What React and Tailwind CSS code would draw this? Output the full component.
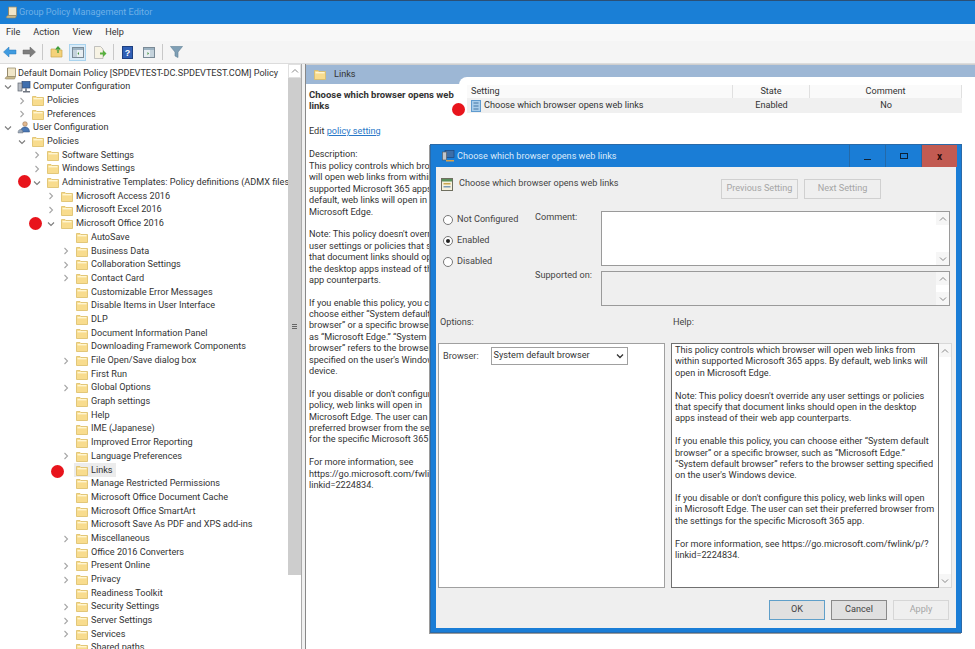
import React from "react";

const font = "font-['Roboto','Noto_Sans',sans-serif]";

function Folder({ className = "" }) {
  return (
    <svg width="12" height="11" viewBox="0 0 12 11" className={`shrink-0 ${className}`}>
      <path d="M0.5 1.5h3.5l1 1h6.5v8h-11z" fill="#f8dc8e" stroke="#dcbc66" strokeWidth="0.8" />
      <rect x="1.5" y="3" width="9" height="1.4" fill="#fff6d2" />
    </svg>
  );
}

function Chevron({ open }) {
  return (
    <svg width="8" height="8" viewBox="0 0 8 8" className="shrink-0">
      {open ? (
        <path d="M1 2.5l3 3 3-3" fill="none" stroke="#7c7c7c" strokeWidth="1.1" />
      ) : (
        <path d="M2.5 1l3 3-3 3" fill="none" stroke="#a6a6a6" strokeWidth="1.1" />
      )}
    </svg>
  );
}

function BookIcon() {
  return (
    <svg width="13" height="13" viewBox="0 0 13 13" className="shrink-0">
      <path d="M3.5 1h8v8.5h-8z" fill="#f0e6c8" stroke="#9a8f70" strokeWidth="0.8" />
      <path d="M1 11.5c1-2 2-2 2.5-2h8l-1 2.5h-8z" fill="#c9b98c" stroke="#8f8465" strokeWidth="0.6" />
      <path d="M3.5 1v8.5" stroke="#8f8465" strokeWidth="0.8" />
    </svg>
  );
}

function ComputerIcon() {
  return (
    <svg width="14" height="12" viewBox="0 0 14 12" className="shrink-0">
      <rect x="5" y="0.5" width="8" height="6.5" fill="#3f6fae" stroke="#2c4a78" strokeWidth="0.7" />
      <rect x="1" y="2" width="4" height="8" fill="#b7bcc4" stroke="#5f6670" strokeWidth="0.7" />
      <path d="M6 10h7v1.5H6z" fill="#6f7580" />
      <rect x="8" y="7" width="2" height="3" fill="#8a909a" />
    </svg>
  );
}

function UserIcon() {
  return (
    <svg width="14" height="13" viewBox="0 0 14 13" className="shrink-0">
      <circle cx="8" cy="3" r="2.3" fill="#e3b98f" stroke="#8a6a4a" strokeWidth="0.5" />
      <path d="M3.5 11c0-3.5 2-5 4.5-5s4.5 1.5 4.5 5z" fill="#4a78b5" stroke="#2c4a78" strokeWidth="0.5" />
      <path d="M1 12c0-2.5 1-3.5 2.5-3.5S6 9.5 6 12z" fill="#9aa7b8" stroke="#5f6670" strokeWidth="0.4" />
    </svg>
  );
}

const tree = [
  { d: 0, label: "Default Domain Policy [SPDEVTEST-DC.SPDEVTEST.COM] Policy", icon: "book" },
  { d: 1, label: "Computer Configuration", icon: "computer", arrow: "open" },
  { d: 2, label: "Policies", arrow: "closed" },
  { d: 2, label: "Preferences", arrow: "closed" },
  { d: 1, label: "User Configuration", icon: "user", arrow: "open" },
  { d: 2, label: "Policies", arrow: "open" },
  { d: 3, label: "Software Settings", arrow: "closed" },
  { d: 3, label: "Windows Settings", arrow: "closed" },
  { d: 3, label: "Administrative Templates: Policy definitions (ADMX files)", arrow: "open" },
  { d: 4, label: "Microsoft Access 2016", arrow: "closed" },
  { d: 4, label: "Microsoft Excel 2016", arrow: "closed" },
  { d: 4, label: "Microsoft Office 2016", arrow: "open" },
  { d: 5, label: "AutoSave" },
  { d: 5, label: "Business Data", arrow: "closed" },
  { d: 5, label: "Collaboration Settings", arrow: "closed" },
  { d: 5, label: "Contact Card", arrow: "closed" },
  { d: 5, label: "Customizable Error Messages" },
  { d: 5, label: "Disable Items in User Interface" },
  { d: 5, label: "DLP" },
  { d: 5, label: "Document Information Panel" },
  { d: 5, label: "Downloading Framework Components" },
  { d: 5, label: "File Open/Save dialog box", arrow: "closed" },
  { d: 5, label: "First Run" },
  { d: 5, label: "Global Options", arrow: "closed" },
  { d: 5, label: "Graph settings" },
  { d: 5, label: "Help" },
  { d: 5, label: "IME (Japanese)" },
  { d: 5, label: "Improved Error Reporting" },
  { d: 5, label: "Language Preferences", arrow: "closed" },
  { d: 5, label: "Links", selected: true },
  { d: 5, label: "Manage Restricted Permissions" },
  { d: 5, label: "Microsoft Office Document Cache" },
  { d: 5, label: "Microsoft Office SmartArt" },
  { d: 5, label: "Microsoft Save As PDF and XPS add-ins" },
  { d: 5, label: "Miscellaneous", arrow: "closed" },
  { d: 5, label: "Office 2016 Converters" },
  { d: 5, label: "Present Online", arrow: "closed" },
  { d: 5, label: "Privacy", arrow: "closed" },
  { d: 5, label: "Readiness Toolkit" },
  { d: 5, label: "Security Settings", arrow: "closed" },
  { d: 5, label: "Server Settings", arrow: "closed" },
  { d: 5, label: "Services", arrow: "closed" },
  { d: 5, label: "Shared paths" },
];

function TreeRow({ row }) {
  const pad = ["pl-[5px]", "pl-[4px]", "pl-[18px]", "pl-[33px]", "pl-[47px]", "pl-[62px]"][row.d];
  return (
    <div className={`flex h-[13.7px] shrink-0 items-center whitespace-nowrap ${pad}`}>
      {row.d > 0 && (
        <span className="flex w-[12px] shrink-0 justify-start">
          {row.arrow && <Chevron open={row.arrow === "open"} />}
        </span>
      )}
      <span className={`flex h-[13.7px] items-center pr-[3px] ${row.selected ? "bg-[#ececec]" : ""}`}>
        <span className={`flex justify-center ${row.d === 0 ? "w-[11px]" : "w-[15px]"}`}>
          {row.icon === "book" && <BookIcon />}
          {row.icon === "computer" && <ComputerIcon />}
          {row.icon === "user" && <UserIcon />}
          {!row.icon && <Folder />}
        </span>
        <span className="ml-[2px] text-[9.15px] leading-none text-[#333]">{row.label}</span>
      </span>
    </div>
  );
}

function ScrollBtn({ up, className = "" }) {
  return (
    <div className={`flex shrink-0 items-center justify-center ${className}`}>
      <svg width="8" height="6" viewBox="0 0 8 6">
        <path d={up ? "M1 4.5l3-3 3 3" : "M1 1.5l3 3 3-3"} fill="none" stroke="#888" strokeWidth="1" />
      </svg>
    </div>
  );
}

function ToolIcon({ children, active }) {
  return (
    <div className={`flex h-[17px] w-[17px] items-center justify-center ${active ? "border border-[#a9d3ee] bg-[#d8ebf8]" : ""}`}>
      {children}
    </div>
  );
}

function Toolbar() {
  const sep = <div className="mx-[5px] h-[16px] w-px bg-[#c8c8c8]" />;
  return (
    <div className="flex h-[22px] shrink-0 items-center bg-[#f5f5f5] pl-[1px]">
      <svg width="15" height="12" viewBox="0 0 15 12" className="mx-[1px]"><path d="M7 1L1.5 6 7 11V8h7V4H7z" fill="#3f9be0" stroke="#2a78b8" strokeWidth="0.5" /></svg>
      <svg width="15" height="12" viewBox="0 0 15 12" className="ml-[4px]"><path d="M8 1l5.5 5L8 11V8H1V4h7z" fill="#7d7d7d" stroke="#666" strokeWidth="0.5" /></svg>
      {sep}
      <ToolIcon>
        <svg width="13" height="12" viewBox="0 0 13 12"><path d="M1 3h4l1 1h6v7H1z" fill="#f4d27a" stroke="#c9a64e" strokeWidth="0.7" /><path d="M8 7V2M5.8 3.5L8 1l2.2 2.5" fill="none" stroke="#3f9e3a" strokeWidth="1.3" /></svg>
      </ToolIcon>
      <div className="w-[4px]" />
      <ToolIcon active>
        <svg width="12" height="11" viewBox="0 0 12 11"><rect x="0.5" y="0.5" width="11" height="10" fill="#e8eef2" stroke="#7a8a96" /><rect x="1" y="1" width="10" height="2" fill="#9db3c2" /><rect x="1" y="3" width="4" height="7" fill="#c5d3dc" /><path d="M7 5L5.5 6.5 7 8z" fill="#3f8f3a" /></svg>
      </ToolIcon>
      <div className="w-[5px]" />
      <ToolIcon>
        <svg width="14" height="13" viewBox="0 0 14 13"><path d="M1.5 0.5h6l2.5 2.5v9.5H1.5z" fill="#f7f3e4" stroke="#aaa" strokeWidth="0.7" /><path d="M7 6.5h3V4l3.5 3.5L10 11V8.5H7z" fill="#58b03f" /></svg>
      </ToolIcon>
      {sep}
      <ToolIcon>
        <svg width="11" height="13" viewBox="0 0 11 13"><rect x="0.5" y="0.5" width="10" height="12" fill="#2f5fb5" stroke="#1d3f80" /><text x="5.5" y="10" textAnchor="middle" fontSize="9" fontWeight="700" fill="#fff" fontFamily="Liberation Sans, sans-serif">?</text></svg>
      </ToolIcon>
      <div className="w-[4px]" />
      <ToolIcon>
        <svg width="12" height="11" viewBox="0 0 12 11"><rect x="0.5" y="0.5" width="11" height="10" fill="#e8eef2" stroke="#7a8a96" /><rect x="1" y="1" width="10" height="2" fill="#9db3c2" /><rect x="7" y="3" width="4" height="7" fill="#c5d3dc" /><path d="M4.5 5L6 6.5 4.5 8z" fill="#3f8f3a" /></svg>
      </ToolIcon>
      {sep}
      <ToolIcon>
        <svg width="13" height="12" viewBox="0 0 13 12"><path d="M0.5 0.5h12L8 6v5.5L5 10V6z" fill="#7f9fb5" stroke="#5f7f95" strokeWidth="0.6" /></svg>
      </ToolIcon>
    </div>
  );
}

const descParas = [
  ["This policy controls which browser", "will open web links from within", "supported Microsoft 365 apps. By", "default, web links will open in", "Microsoft Edge."],
  ["Note: This policy doesn't override any", "user settings or policies that specify", "that document links should open in", "the desktop apps instead of their web", "app counterparts."],
  ["If you enable this policy, you can", "choose either “System default", "browser” or a specific browser, such", "as “Microsoft Edge.” “System default", "browser” refers to the browser setting", "specified on the user's Windows", "device."],
  ["If you disable or don't configure this", "policy, web links will open in", "Microsoft Edge. The user can set their", "preferred browser from the settings", "for the specific Microsoft 365 app."],
  ["For more information, see", "https://go.microsoft.com/fwlink/p/?", "linkid=2224834."],
];

const helpParas = [
  ["This policy controls which browser will open web links from", "within supported Microsoft 365 apps. By default, web links will", "open in Microsoft Edge."],
  ["Note: This policy doesn't override any user settings or policies", "that specify that document links should open in the desktop", "apps instead of their web app counterparts."],
  ["If you enable this policy, you can choose either “System default", "browser” or a specific browser, such as “Microsoft Edge.”", "“System default browser” refers to the browser setting specified", "on the user's Windows device."],
  ["If you disable or don't configure this policy, web links will open", "in Microsoft Edge. The user can set their preferred browser from", "the settings for the specific Microsoft 365 app."],
  ["For more information, see https://go.microsoft.com/fwlink/p/?", "linkid=2224834."],
];

function Paras({ paras }) {
  return (
    <div className="flex flex-col gap-[11.4px]">
      {paras.map((p, i) => (
        <div key={i}>
          {p.map((l) => (
            <div key={l} className="h-[11.4px] whitespace-nowrap leading-[11.4px]">{l}</div>
          ))}
        </div>
      ))}
    </div>
  );
}

function Radio({ label, checked }) {
  return (
    <div className="flex h-[10px] items-center gap-[4px] text-[9.15px] text-[#444]">
      <span className="flex h-[10px] w-[10px] items-center justify-center rounded-full border border-[#777] bg-white">
        {checked && <span className="h-[4px] w-[4px] rounded-full bg-[#222]" />}
      </span>
      {label}
    </div>
  );
}

function ScrollColumn({ className = "" }) {
  return (
    <div className={`flex w-[13px] shrink-0 flex-col justify-between bg-white ${className}`}>
      <ScrollBtn up className="h-[13px] bg-[#f6f6f6]" />
      <ScrollBtn className="h-[13px] bg-[#f6f6f6]" />
    </div>
  );
}

function PolicyDialog() {
  return (
    <div className="absolute left-[430px] top-[144px] flex h-[489px] w-[532px] flex-col border border-[#2a6aa8] bg-[#1a7dd6] shadow-[-1px_1px_0_#9a9a9a]">
      <div className="flex h-[22px] shrink-0 items-center pl-[11px]">
        <svg width="13" height="12" viewBox="0 0 13 12"><rect x="3" y="0.5" width="9" height="7" fill="#3d6ea8" stroke="#1d3f70" strokeWidth="0.6" /><rect x="0.5" y="2" width="4" height="8" fill="#c2c6cc" stroke="#555" strokeWidth="0.6" /><path d="M4 10h8v1.5H4z" fill="#d9a24a" /></svg>
        <span className="ml-[2px] pt-[1px] text-[9.15px] text-[#dbeafa]">Choose which browser opens web links</span>
        <div className="ml-auto mr-[4px] flex h-[22px]">
          <div className="flex w-[37px] items-end justify-center border-x border-[#2469a8] pb-[7px]"><div className="h-[1.5px] w-[7px] bg-[#123]" /></div>
          <div className="flex w-[36px] items-center justify-center border-r border-[#2469a8]"><div className="h-[6px] w-[8px] border-[1.5px] border-[#0a2036]" /></div>
          <div className="flex w-[35px] items-center justify-center bg-[#c25b52] text-[10px] font-bold text-[#2a0c0a]">x</div>
        </div>
      </div>
      <div className="mx-[5px] mb-[4px] flex min-h-0 flex-1 flex-col bg-[#efefef] text-[#444]">
        <div className="flex h-[31px] shrink-0 items-center pl-[5px]">
          <svg width="12" height="13" viewBox="0 0 12 13" className="mt-[3px]"><rect x="0.5" y="0.5" width="11" height="12" fill="#f6f1dc" stroke="#6f6f5f" /><rect x="1" y="1" width="10" height="2.5" fill="#5a8f5a" /><rect x="2.5" y="5" width="7" height="1.5" fill="#c9a64e" /><rect x="2.5" y="8" width="7" height="1.5" fill="#7a9ab5" /></svg>
          <span className="ml-[6px] mt-[3px] text-[9.15px]">Choose which browser opens web links</span>
          <div className="ml-auto mr-[75px] mt-[13px] flex gap-[6px]">
            <div className="flex h-[20px] w-[77px] items-center justify-center border-[1.5px] border-[#d0d0d0] bg-[#efefef] text-[9.15px] text-[#a6a6a6]">Previous Setting</div>
            <div className="flex h-[20px] w-[77px] items-center justify-center border-[1.5px] border-[#d0d0d0] bg-[#efefef] text-[9.15px] text-[#a6a6a6]">Next Setting</div>
          </div>
        </div>
        <div className="flex h-[112px] shrink-0 pl-[7px] pt-[13px]">
          <div className="flex w-[92px] flex-col gap-[11px] pt-[4px]">
            <Radio label="Not Configured" />
            <Radio label="Enabled" checked />
            <Radio label="Disabled" />
          </div>
          <div className="flex w-[66px] flex-col text-[9.15px]">
            <div className="h-[58px]">Comment:</div>
            <div>Supported on:</div>
          </div>
          <div className="flex w-[349px] flex-col gap-[5px]">
            <div className="flex h-[55px] border border-[#9a9a9a] bg-white">
              <div className="flex-1" />
              <ScrollColumn />
            </div>
            <div className="flex h-[35px] border border-[#9a9a9a] bg-[#efefef]">
              <div className="flex-1" />
              <ScrollColumn />
            </div>
          </div>
        </div>
        <div className="flex h-[24px] shrink-0 items-center pl-[4px] pt-[1px] text-[9.15px]">
          <div className="w-[233px]">Options:</div>
          <div>Help:</div>
        </div>
        <div className="flex h-[255px] shrink-0 pl-[2px] pt-[9px]">
          <div className="flex h-[245px] w-[227px] shrink-0 items-start gap-[12px] border border-[#a0a0a0] bg-white pl-[4px] pt-[3px] text-[9.15px]">
            <span className="pt-[3px]">Browser:</span>
            <div className="flex h-[18px] w-[137px] items-center justify-between border border-[#a0a0a0] pl-[2px] pr-[3px] text-[#333]">
              System default browser
              <svg width="8" height="6" viewBox="0 0 8 6"><path d="M1 1.5l3 3 3-3" fill="none" stroke="#333" strokeWidth="1.3" /></svg>
            </div>
          </div>
          <div className="ml-[6px] flex h-[245px]">
            <div className="w-[268px] border border-[#707070] bg-white pl-[3px] pt-[1px] text-[9.15px] text-[#333]">
              <Paras paras={helpParas} />
            </div>
            <ScrollColumn className="border-y border-r border-[#d8d8d8]" />
          </div>
        </div>
        <div className="flex justify-end gap-[6px] pr-[7px] pt-[11px] text-[9.15px]">
          <div className="flex h-[20px] w-[56px] items-center justify-center border-[1.5px] border-[#5f9fc9] bg-[#e0e0e0]">OK</div>
          <div className="flex h-[20px] w-[56px] items-center justify-center border-[1.5px] border-[#8a8a8a] bg-[#e0e0e0]">Cancel</div>
          <div className="flex h-[20px] w-[56px] items-center justify-center border-[1.5px] border-[#d6d6d6] text-[#a6a6a6]">Apply</div>
        </div>
      </div>
    </div>
  );
}

function RedDot({ className }) {
  return <div className={`absolute h-[13px] w-[13px] rounded-full bg-[#e8141c] ${className}`} />;
}

export default function App() {
  return (
    <div className={`relative flex h-[649px] w-[975px] flex-col overflow-hidden bg-white ${font}`}>
      <div className="flex h-[24px] shrink-0 items-center border-t border-[#2b4f75] bg-[#1a7fd6] pl-[5px]">
        <BookIcon />
        <span className="ml-[1px] pt-[1px] text-[9.15px] text-[#6fb0e6]">Group Policy Management Editor</span>
      </div>
      <div className="flex h-[17px] shrink-0 items-center gap-[13px] bg-[#f8f8f8] pl-[6px] pt-[1px] text-[9.15px] text-[#333]">
        <span>File</span>
        <span>Action</span>
        <span>View</span>
        <span>Help</span>
      </div>
      <Toolbar />
      <div className="flex min-h-0 flex-1 border-t border-[#dcdcdc]">
        <div className="flex w-[302px] shrink-0 overflow-hidden border-r border-[#aaa]">
          <div className="flex w-[288px] shrink-0 flex-col overflow-hidden pt-[2.3px]">
            {tree.map((row, i) => (
              <TreeRow key={i} row={row} />
            ))}
          </div>
          <div className="flex flex-1 flex-col bg-white">
            <ScrollBtn up className="h-[14px] border border-[#e0e0e0]" />
            <div className="flex h-[497px] flex-col items-center justify-center gap-[1px] bg-[#cdcdcd]">
              <div className="h-px w-[5px] bg-[#666]" />
              <div className="h-px w-[5px] bg-[#666]" />
              <div className="h-px w-[5px] bg-[#666]" />
            </div>
          </div>
        </div>
        <div className="w-[3px] shrink-0 bg-[#f0f0f0]" />
        <div className="flex min-w-0 flex-1 flex-col border-l border-[#888]">
          <div className="flex h-[20px] shrink-0 items-center border-t border-[#cfcfcf] bg-[#9db7d5] pl-[8px] text-[9.15px] text-[#333]">
            <Folder />
            <span className="ml-[8px]">Links</span>
          </div>
          <div className="flex min-h-0 flex-1">
            <div className="w-[153px] shrink-0 overflow-hidden pl-[3px] pt-[5px] text-[9.15px] text-[#333]">
              <div className="text-[9.5px] font-bold leading-[11.4px]">
                <div className="whitespace-nowrap">Choose which browser opens web</div>
                <div>links</div>
              </div>
              <div className="mt-[14px] leading-[11.4px]">
                Edit <span className="text-[#2a78c8] underline">policy setting </span>
              </div>
              <div className="mb-[1px] mt-[11.4px] h-[11.4px] leading-[11.4px]">Description:</div>
              <Paras paras={descParas} />
            </div>
            <div className="-mt-[7px] flex-1 rounded-tl-[8px] bg-white pl-[8px] pt-[8px]">
              <div className="flex h-[13px] w-[495px] items-center bg-[#fafafa] text-[9.15px] text-[#333]">
                <div className="h-[13px] w-[266px] border-r border-[#e0e0e0] pl-[4px] leading-[13px]">Setting</div>
                <div className="h-[13px] w-[77px] border-r border-[#e0e0e0] text-center leading-[13px]">State</div>
                <div className="h-[13px] w-[152px] border-r border-[#e0e0e0] text-center leading-[13px]">Comment</div>
              </div>
              <div className="flex h-[15px] w-[495px] items-center bg-[#f0f0f0] pt-[1px] text-[9.15px] text-[#333]">
                <div className="flex w-[266px] items-center pl-[4px]">
                  <svg width="10" height="12" viewBox="0 0 10 12" className="shrink-0"><rect x="0.5" y="0.5" width="9" height="11" fill="#a9cdea" stroke="#5f9bcf" /><path d="M2.5 3h5M2.5 6h5M2.5 9h5" stroke="#2a5f95" strokeWidth="0.8" /></svg>
                  <span className="ml-[3px] whitespace-nowrap">Choose which browser opens web links</span>
                </div>
                <div className="w-[77px] text-center">Enabled</div>
                <div className="w-[152px] text-center">No</div>
              </div>
            </div>
          </div>
        </div>
      </div>
      <PolicyDialog />
      <RedDot className="left-[18px] top-[175px]" />
      <RedDot className="left-[29px] top-[217px]" />
      <RedDot className="left-[51px] top-[465px]" />
      <RedDot className="left-[452px] top-[103px]" />
    </div>
  );
}
